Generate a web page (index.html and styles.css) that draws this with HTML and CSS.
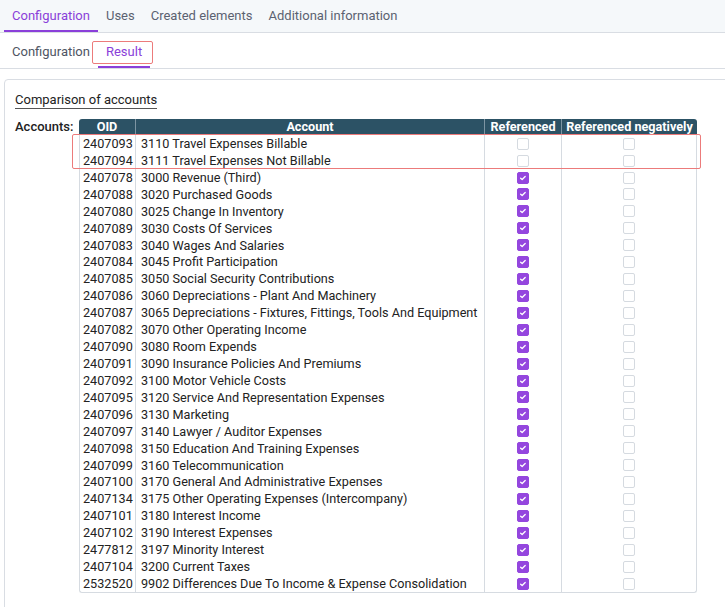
FILE: index.html
```html
<!DOCTYPE html>
<html>
<head>
<meta charset="utf-8">
<link rel="stylesheet" href="styles.css">
</head>
<body>
<div class="tabs">
  <div class="tab active">Configuration</div>
  <div class="tab">Uses</div>
  <div class="tab">Created elements</div>
  <div class="tab">Additional information</div>
</div>
<div class="subtabs">
  <div class="subtab">Configuration</div>
  <div class="subtab active">Result<span class="mark mark-tab"></span></div>
</div>
<div class="panel">
  <div class="section-title">Comparison of accounts</div>
  <div class="field">
    <div class="label">Accounts:</div>
    <div class="table-wrap">
      <table class="grid">
        <colgroup>
          <col class="c-oid"><col class="c-acc"><col class="c-ref"><col class="c-neg">
        </colgroup>
        <thead>
          <tr><th>OID</th><th>Account</th><th>Referenced</th><th>Referenced negatively</th></tr>
        </thead>
        <tbody>
          <tr><td>2407093</td><td>3110 Travel Expenses Billable</td><td><span class="cb"></span></td><td><span class="cb"></span></td></tr>
          <tr><td>2407094</td><td>3111 Travel Expenses Not Billable</td><td><span class="cb"></span></td><td><span class="cb"></span></td></tr>
          <tr><td>2407078</td><td>3000 Revenue (Third)</td><td><span class="cb on"></span></td><td><span class="cb"></span></td></tr>
          <tr><td>2407088</td><td>3020 Purchased Goods</td><td><span class="cb on"></span></td><td><span class="cb"></span></td></tr>
          <tr><td>2407080</td><td>3025 Change In Inventory</td><td><span class="cb on"></span></td><td><span class="cb"></span></td></tr>
          <tr><td>2407089</td><td>3030 Costs Of Services</td><td><span class="cb on"></span></td><td><span class="cb"></span></td></tr>
          <tr><td>2407083</td><td>3040 Wages And Salaries</td><td><span class="cb on"></span></td><td><span class="cb"></span></td></tr>
          <tr><td>2407084</td><td>3045 Profit Participation</td><td><span class="cb on"></span></td><td><span class="cb"></span></td></tr>
          <tr><td>2407085</td><td>3050 Social Security Contributions</td><td><span class="cb on"></span></td><td><span class="cb"></span></td></tr>
          <tr><td>2407086</td><td>3060 Depreciations - Plant And Machinery</td><td><span class="cb on"></span></td><td><span class="cb"></span></td></tr>
          <tr><td>2407087</td><td>3065 Depreciations - Fixtures, Fittings, Tools And Equipment</td><td><span class="cb on"></span></td><td><span class="cb"></span></td></tr>
          <tr><td>2407082</td><td>3070 Other Operating Income</td><td><span class="cb on"></span></td><td><span class="cb"></span></td></tr>
          <tr><td>2407090</td><td>3080 Room Expends</td><td><span class="cb on"></span></td><td><span class="cb"></span></td></tr>
          <tr><td>2407091</td><td>3090 Insurance Policies And Premiums</td><td><span class="cb on"></span></td><td><span class="cb"></span></td></tr>
          <tr><td>2407092</td><td>3100 Motor Vehicle Costs</td><td><span class="cb on"></span></td><td><span class="cb"></span></td></tr>
          <tr><td>2407095</td><td>3120 Service And Representation Expenses</td><td><span class="cb on"></span></td><td><span class="cb"></span></td></tr>
          <tr><td>2407096</td><td>3130 Marketing</td><td><span class="cb on"></span></td><td><span class="cb"></span></td></tr>
          <tr><td>2407097</td><td>3140 Lawyer / Auditor Expenses</td><td><span class="cb on"></span></td><td><span class="cb"></span></td></tr>
          <tr><td>2407098</td><td>3150 Education And Training Expenses</td><td><span class="cb on"></span></td><td><span class="cb"></span></td></tr>
          <tr><td>2407099</td><td>3160 Telecommunication</td><td><span class="cb on"></span></td><td><span class="cb"></span></td></tr>
          <tr><td>2407100</td><td>3170 General And Administrative Expenses</td><td><span class="cb on"></span></td><td><span class="cb"></span></td></tr>
          <tr><td>2407134</td><td>3175 Other Operating Expenses (Intercompany)</td><td><span class="cb on"></span></td><td><span class="cb"></span></td></tr>
          <tr><td>2407101</td><td>3180 Interest Income</td><td><span class="cb on"></span></td><td><span class="cb"></span></td></tr>
          <tr><td>2407102</td><td>3190 Interest Expenses</td><td><span class="cb on"></span></td><td><span class="cb"></span></td></tr>
          <tr><td>2477812</td><td>3197 Minority Interest</td><td><span class="cb on"></span></td><td><span class="cb"></span></td></tr>
          <tr><td>2407104</td><td>3200 Current Taxes</td><td><span class="cb on"></span></td><td><span class="cb"></span></td></tr>
          <tr><td>2532520</td><td>9902 Differences Due To Income &amp; Expense Consolidation</td><td><span class="cb on"></span></td><td><span class="cb"></span></td></tr>
        </tbody>
      </table>
      <div class="mark mark-rows"></div>
    </div>
  </div>
</div>
</body>
</html>
```
FILE: styles.css
```css
* { box-sizing: border-box; }
html, body { margin: 0; padding: 0; }
body {
  font-family: Roboto, "Liberation Sans", sans-serif;
  font-size: 12px;
  color: #222;
  background: #fff;
  overflow: hidden;
  width: 725px;
  height: 607px;
}
.tabs {
  display: flex;
  padding-left: 4px;
  height: 33px;
  background: #f5f8fa;
  border-bottom: 1px solid #d9dde3;
}
.tab {
  padding: 0 8px;
  font-size: 13px;
  line-height: 31px;
  height: 32px;
  color: #5b6271;
  border-bottom: 2px solid transparent;
}
.tab.active {
  color: #8a3fd9;
  border-bottom-color: #8a3fd9;
}
.subtabs {
  display: flex;
  padding-left: 4px;
  padding-top: 9px;
  height: 36px;
  border-bottom: 1px solid #d9dde3;
}
.subtab {
  position: relative;
  padding: 0 8px;
  font-size: 13px;
  line-height: 20px;
  height: 26px;
  color: #4e5563;
  border-bottom: 2px solid transparent;
}
.subtab.active {
  color: #8a3fd9;
  border-bottom-color: #8a3fd9;
}
.mark {
  position: absolute;
  border: 1.5px solid #ec7b7b;
  border-radius: 2px;
  pointer-events: none;
}
.mark-tab {
  left: -6px;
  top: -1px;
  width: 61px;
  height: 23px;
}
.panel {
  margin-top: 10px;
  margin-left: 4px;
  width: 740px;
  height: 540px;
  border: 1px solid #d9dde3;
  border-radius: 4px 0 0 0;
  padding: 12px 0 0 10px;
}
.section-title {
  font-size: 13px;
  color: #222;
  display: inline-block;
  line-height: 16px;
  border-bottom: 1px solid #555;
}
.field {
  display: flex;
  margin-top: 10px;
}
.label {
  width: 64px;
  font-size: 13px;
  font-weight: 500;
  color: #222;
  line-height: 16px;
}
.table-wrap {
  position: relative;
}
.grid {
  border-collapse: separate;
  border-spacing: 0;
  table-layout: fixed;
  width: 618px;
  font-size: 12.65px;
}
.c-oid { width: 56px; }
.c-acc { width: 349px; }
.c-ref { width: 77px; }
.c-neg { width: 136px; }
.grid th {
  background: #2c5265;
  color: #fff;
  font-weight: 700;
  height: 16px;
  line-height: 16px;
  padding: 0;
  text-align: center;
  white-space: nowrap;
  border-left: 1px solid #7d95a3;
}
.grid th:first-child { border-left: none; border-top-left-radius: 3px; }
.grid th:last-child { border-top-right-radius: 3px; }
.grid td {
  height: 16.92px;
  line-height: 15.92px;
  padding: 1px 0 0 4px;
  white-space: nowrap;
  overflow: hidden;
  border-left: 1px solid #d6dbe1;
  color: #222;
}
.grid td:first-child { padding-left: 3px; }
.grid td:nth-child(2) { padding-left: 5px; }
.grid td:nth-child(3), .grid td:nth-child(4) { text-align: center; padding: 1px 0 0 0; }
.grid td:last-child { border-right: 1px solid #d6dbe1; }
.grid tbody tr:last-child td { border-bottom: 1px solid #d6dbe1; }
.grid tbody tr:last-child td:first-child { border-bottom-left-radius: 3px; }
.grid tbody tr:last-child td:last-child { border-bottom-right-radius: 3px; }
.cb {
  display: inline-block;
  width: 12px;
  height: 12px;
  border: 1px solid #d5dae0;
  border-radius: 2px;
  vertical-align: middle;
  margin-top: -2px;
  background: #fff;
}
.cb.on {
  border-color: #9446de;
  background: #9446de url("data:image/svg+xml,%3Csvg xmlns='http://www.w3.org/2000/svg' viewBox='0 0 12 12'%3E%3Cpath d='M3.2 6.2 L5 7.8 L8.6 4.2' fill='none' stroke='white' stroke-width='1.6' stroke-linecap='round' stroke-linejoin='round'/%3E%3C/svg%3E") center/10px 10px no-repeat;
}
.mark-rows {
  left: -7px;
  top: 15px;
  width: 629px;
  height: 35px;
}
```
